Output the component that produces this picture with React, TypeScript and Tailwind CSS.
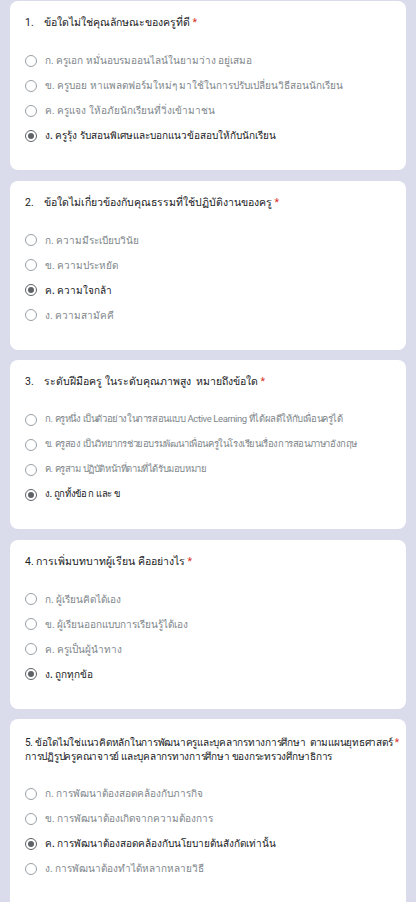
type Q = {
  no: string;
  title: string;
  options: string[];
  picked: number;
  tight?: boolean;
};

const questions: Q[] = [
  {
    no: "1.",
    title: "ข้อใดไม่ใช่คุณลักษณะของครูที่ดี",
    options: [
      "ก. ครูเอก หมั่นอบรมออนไลน์ในยามว่าง อยู่เสมอ",
      "ข. ครูบอย หาแพลตฟอร์มใหม่ๆ มาใช้ในการปรับเปลี่ยนวิธีสอนนักเรียน",
      "ค. ครูแจง ให้อภัยนักเรียนที่วิ่งเข้ามาชน",
      "ง. ครูรุ้ง รับสอนพิเศษและบอกแนวข้อสอบให้กับนักเรียน",
    ],
    picked: 3,
  },
  {
    no: "2.",
    title: "ข้อใดไม่เกี่ยวข้องกับคุณธรรมที่ใช้ปฏิบัติงานของครู",
    options: ["ก. ความมีระเบียบวินัย", "ข. ความประหยัด", "ค. ความใจกล้า", "ง. ความสามัคคี"],
    picked: 2,
  },
  {
    no: "3.",
    title: "ระดับฝีมือครู ในระดับคุณภาพสูง\u00a0 หมายถึงข้อใด",
    options: [
      "ก. ครูหนึ่ง เป็นตัวอย่างในการสอนแบบ Active Learning ที่ได้ผลดีให้กับเพื่อนครูได้",
      "ข. ครูสอง เป็นวิทยากรช่วยอบรมพัฒนาเพื่อนครูในโรงเรียนเรื่องการสอนภาษาอังกฤษ",
      "ค. ครูสาม ปฏิบัติหน้าที่ตามที่ได้รับมอบหมาย",
      "ง. ถูกทั้งข้อ ก และ ข",
    ],
    picked: 3,
    tight: true,
  },
];

function Radio({ on }: { on: boolean }) {
  return on ? (
    <span className="flex h-[12px] w-[12px] shrink-0 items-center justify-center rounded-full border-[1.5px] border-[#5f6368]">
      <span className="h-[6px] w-[6px] rounded-full bg-[#5f6368]" />
    </span>
  ) : (
    <span className="h-[12px] w-[12px] shrink-0 rounded-full border-[1.5px] border-[#9aa0a6]" />
  );
}

function Options({ options, picked, tight }: { options: string[]; picked: number; tight?: boolean }) {
  return (
    <div className="flex flex-col">
      {options.map((o, i) => (
        <div key={o} className="flex h-[25px] items-center gap-[8px]">
          <Radio on={i === picked} />
          <span
            className={
              (tight ? "text-[9.5px] tracking-[-0.4px] " : "text-[10px] ") +
              (i === picked ? "font-medium whitespace-nowrap text-[#202124]" : "whitespace-nowrap text-[#80868b]")
            }
          >
            {o}
          </span>
        </div>
      ))}
    </div>
  );
}

const Star = () => <span className="text-[#d93025]"> *</span>;

export default function App() {
  return (
    <div
      className="flex min-h-[902px] flex-col gap-[10.5px] bg-[#dadcec] px-[10px] pt-[1px] pb-4"
      style={{ fontFamily: "Roboto, 'Noto Sans', 'Liberation Sans', sans-serif" }}
    >
      {questions.map((q) => (
        <div key={q.no} className="h-[169px] rounded-lg bg-white px-[15px] pt-[15px]">
          <div className="flex h-[14px] items-center text-[10.5px] text-[#202124]">
            <span className="w-[19px] shrink-0">{q.no}</span>
            <span className="whitespace-nowrap">
              {q.title}
              <Star />
            </span>
          </div>
          <div className="mt-[18px]">
            <Options options={q.options} picked={q.picked} tight={q.tight} />
          </div>
        </div>
      ))}

      <div className="h-[169px] rounded-lg bg-white px-[15px] pt-[15px]">
        <div className="text-[10.5px] leading-[14px] text-[#202124]">
          4. การเพิ่มบทบาทผู้เรียน คืออย่างไร
          <Star />
        </div>
        <div className="mt-[18px]">
          <Options
            options={["ก. ผู้เรียนคิดได้เอง", "ข. ผู้เรียนออกแบบการเรียนรู้ได้เอง", "ค. ครูเป็นผู้นำทาง", "ง. ถูกทุกข้อ"]}
            picked={3}
          />
        </div>
      </div>

      <div className="h-[200px] rounded-t-lg bg-white px-[15px] pt-[17px]">
        <div className="text-[10px] leading-[14px] tracking-[-0.25px] whitespace-nowrap text-[#202124]">
          5. ข้อใดไม่ใช่แนวคิดหลักในการพัฒนาครูและบุคลากรทางการศึกษา&nbsp; ตามแผนยุทธศาสตร์
          <Star />
          <br />
          การปฏิรูปครูคณาจารย์ และบุคลากรทางการศึกษา ของกระทรวงศึกษาธิการ
        </div>
        <div className="mt-[17px]">
          <Options
            options={[
              "ก. การพัฒนาต้องสอดคล้องกับภารกิจ",
              "ข. การพัฒนาต้องเกิดจากความต้องการ",
              "ค. การพัฒนาต้องสอดคล้องกับนโยบายต้นสังกัดเท่านั้น",
              "ง. การพัฒนาต้องทำได้หลากหลายวิธี",
            ]}
            picked={2}
          />
        </div>
      </div>
    </div>
  );
}
